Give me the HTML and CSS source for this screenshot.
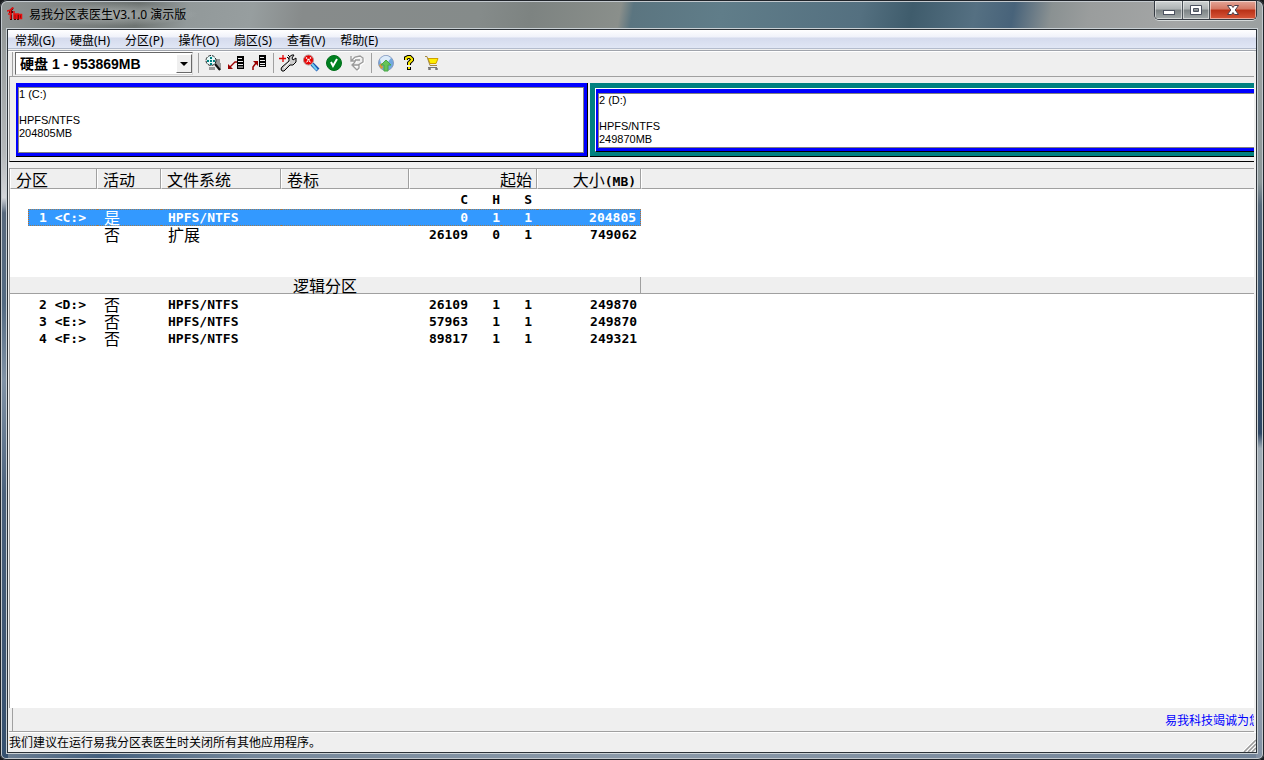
FILE: index.html
```html
<!DOCTYPE html>
<html lang="zh-CN">
<head>
<meta charset="utf-8">
<title>易我分区表医生V3.1.0 演示版</title>
<link rel="stylesheet" href="styles.css">
</head>
<body>
<div class="window">
  <header class="titlebar">
    <svg class="logo" width="16" height="16" viewBox="0 0 16 16" aria-hidden="true">
      <path fill="none" stroke="#500" stroke-width="2" d="M4 14V4l2-2M2 6h4M8 14V8M11 8v6M14 13V9"/>
      <path fill="none" stroke="#e81010" stroke-width="1.500" d="M3.500 13V4l2-2h1M0 5l4-1M1 8h4M7 13V5M7 8h2v5M10 13V8h2M12.500 8.500h2v4h-2z"/>
    </svg>
    <h1 class="title">易我分区表医生V3.1.0 演示版</h1>
    <div class="controls">
      <button class="control minimize" aria-label="最小化"><svg width="14" height="14" viewBox="0 0 14 14"><rect x="1.500" y="7.500" width="11" height="4" fill="#fff" stroke="#4c5260"/></svg></button>
      <button class="control maximize" aria-label="最大化"><svg width="14" height="14" viewBox="0 0 14 14"><path fill="#fff" fill-rule="evenodd" stroke="#4c5260" d="M1.500 2.500h11v9h-11zM4.500 5.500h5v3h-5z"/></svg></button>
      <button class="control close" aria-label="关闭"><svg width="14" height="14" viewBox="0 0 14 14"><path fill="#fff" stroke="#4b3d48" d="M1.500 2.500h4L7 4.500l1.500-2h4L9.200 7l3.300 4.500h-4L7 9.500l-1.500 2h-4L4.800 7z"/></svg></button>
    </div>
  </header>

  <main class="client">
    <nav class="menu" aria-label="菜单">
      <button>常规(G)</button><button>硬盘(H)</button><button>分区(P)</button><button>操作(O)</button><button>扇区(S)</button><button>查看(V)</button><button>帮助(E)</button>
    </nav>

    <div class="toolbar">
      <div class="combo">
        <select aria-label="硬盘"><option>硬盘 1 - 953869MB</option></select>
        <span class="combo-arrow" aria-hidden="true"></span>
      </div>
      <div class="group">
        <button aria-label="浏览"><svg width="18" height="18" viewBox="0 0 18 18"><path fill="#999" d="M12 5h4v4h1v7h-3v-3l-3-3zM5 13h6v3H5z"/><circle cx="7" cy="6.500" r="5" fill="#e4fafa" stroke="#222" stroke-dasharray="3 1"/><path stroke="#008080" stroke-width="2" stroke-dasharray="2 1" d="M7 3v8M3 7h9"/><path stroke="#111" stroke-width="2" d="M11 10l5 6"/></svg></button>
        <button aria-label="保存分区表"><svg width="18" height="18" viewBox="0 0 18 18"><path fill="#000" d="M10 2h7v13h-7z"/><path stroke="#eee" d="M11 4.500h4M11 7.500h5M11 10.500h5M11 13h5"/><path fill="none" stroke="#900" stroke-width="1.300" d="M10 8H8l-5 5"/><path fill="#900" d="M1 10v5h5z"/></svg></button>
        <button aria-label="恢复分区表"><svg width="18" height="18" viewBox="0 0 18 18"><path fill="#000" d="M9 1h7v12H9z"/><path stroke="#eee" d="M10 3.500h4M10 6.500h5M10 9.500h5M10 11.500h5"/><path fill="none" stroke="#900" stroke-width="1.500" d="M3 16v-3l3-4"/><path fill="#900" d="M3 7h5v5z"/></svg></button>
      </div>
      <div class="group">
        <button aria-label="修复"><svg width="18" height="18" viewBox="0 0 18 18"><path fill="#ccc" stroke="#000" d="M3 13l7-6V3l3-2h2l-2 3 1 2 3-2v4l-3 3h-3l-6 6H3l-1-2z"/><path stroke="#fff" d="M5 14l6-6"/><path stroke="#000" d="M8 3l2 2M9 1l2 2"/><path stroke="#e00000" stroke-width="1.300" d="M4 1v7M0 4.500h7"/></svg></button>
        <button aria-label="删除"><svg width="18" height="18" viewBox="0 0 18 18"><path stroke="#1550b0" stroke-width="4" d="M10 10l6 6"/><path stroke="#70d0f0" stroke-width="2" d="M10 10l5 6"/><circle cx="6.500" cy="6" r="5" fill="#e80000" stroke="#b89090"/><path stroke="#fff" stroke-width="1.300" stroke-dasharray="1.500 .7" d="M4 3.500l5 5M9 3.500l-5 5"/></svg></button>
        <button aria-label="应用"><svg width="18" height="18" viewBox="0 0 18 18"><circle cx="9" cy="9" r="7.500" fill="#008020" stroke="#00701a"/><path fill="none" stroke="#fff" stroke-width="2" d="M6 8l2 4 4-7"/></svg></button>
        <button aria-label="撤销"><svg width="18" height="18" viewBox="0 0 18 18"><g fill="none" stroke-width="1.300"><path stroke="#fff" d="M4 3v5h5M4 8l4-4 5-1 3 2v4l-5 3H6M6 12l4 4M12 12v3l-2 2"/><path stroke="#999" d="M3 2v5h5M3 7l4-4 5-1 3 2v4l-5 3H5M7 8l-3 3 5 5M5 11h6v3l-2 2M7 6h5"/></g></svg></button>
      </div>
      <div class="group">
        <button aria-label="网站"><svg width="18" height="18" viewBox="0 0 18 18"><circle cx="9" cy="9" r="7.500" fill="#70a8e0" stroke="#8a9cc0"/><path fill="#dcebfa" d="M3 5q5-6 11-1l-3 4-7 2z"/><path fill="#d99a38" d="M2 11l3-2 1 5-2 1z"/><path fill="#67c458" stroke="#48a848" d="M9 6l5 5h-3v6H7v-6H4z"/></svg></button>
        <button aria-label="帮助"><svg width="18" height="18" viewBox="0 0 18 18"><g fill="none" stroke="#000" stroke-width="4"><path d="M6 6V4l2-1h2l2 2v1l-3 3v2M9 13v3"/></g><g fill="none" stroke="#f8e800" stroke-width="2"><path d="M6 6V4l2-1h2l2 2v1l-3 3v2M9 13v2"/></g></svg></button>
        <button aria-label="购买"><svg width="18" height="18" viewBox="0 0 18 18"><path fill="#fff000" stroke="#d0a000" d="M5 4.500h10l-2 5H7z"/><path fill="none" stroke="#a48a40" d="M2 2.500h2l3 9h7"/><path stroke="#777" d="M5 13.500h9"/><path fill="none" stroke="#777" d="M5.500 14.500h2v1h-2zM12.500 14.500h2v1h-2z"/></svg></button>
      </div>
    </div>

    <section class="map" aria-label="分区图">
      <div class="partition primary">
        <div class="partition-body"><p>1 (C:)</p><p>&nbsp;</p><p>HPFS/NTFS</p><p>204805MB</p></div>
      </div>
      <div class="extended">
        <div class="partition logical">
          <div class="partition-body"><p>2 (D:)</p><p>&nbsp;</p><p>HPFS/NTFS</p><p>249870MB</p></div>
        </div>
      </div>
    </section>

    <section class="list">
      <table>
        <colgroup><col class="w-indent"><col class="w-no"><col class="w-active"><col class="w-fs"><col class="w-label"><col class="w-c"><col class="w-h"><col class="w-s"><col class="w-size"><col></colgroup>
        <thead>
          <tr class="head"><th colspan="2">分区</th><th>活动</th><th>文件系统</th><th>卷标</th><th class="num" colspan="3">起始</th><th class="num">大小<span class="unit">(MB)</span></th><th></th></tr>
        </thead>
        <tbody>
          <tr class="sub"><td colspan="5"></td><td class="num">C</td><td class="num">H</td><td class="num">S</td><td></td><td></td></tr>
          <tr class="selected"><td></td><td class="no">1 &lt;C:&gt;</td><td class="zh">是</td><td>HPFS/NTFS</td><td></td><td class="num">0</td><td class="num">1</td><td class="num">1</td><td class="num">204805</td><td></td></tr>
          <tr><td></td><td class="no"></td><td class="zh">否</td><td class="zh">扩展</td><td></td><td class="num">26109</td><td class="num">0</td><td class="num">1</td><td class="num">749062</td><td></td></tr>
          <tr class="space"><td colspan="10"></td></tr>
        </tbody>
        <tbody>
          <tr class="section"><th colspan="9">逻辑分区</th><th></th></tr>
          <tr class="gap"><td colspan="10"></td></tr>
          <tr><td></td><td class="no">2 &lt;D:&gt;</td><td class="zh">否</td><td>HPFS/NTFS</td><td></td><td class="num">26109</td><td class="num">1</td><td class="num">1</td><td class="num">249870</td><td></td></tr>
          <tr><td></td><td class="no">3 &lt;E:&gt;</td><td class="zh">否</td><td>HPFS/NTFS</td><td></td><td class="num">57963</td><td class="num">1</td><td class="num">1</td><td class="num">249870</td><td></td></tr>
          <tr><td></td><td class="no">4 &lt;F:&gt;</td><td class="zh">否</td><td>HPFS/NTFS</td><td></td><td class="num">89817</td><td class="num">1</td><td class="num">1</td><td class="num">249321</td><td></td></tr>
        </tbody>
      </table>
    </section>

    <div class="banner"><a href="#">易我科技竭诚为您</a></div>

    <footer class="status">
      <span>我们建议在运行易我分区表医生时关闭所有其他应用程序。</span>
      <svg class="grip" width="13" height="13" viewBox="0 0 13 13" aria-hidden="true"><path stroke="#fff" d="M0 12L12 0M4 12l8-8M8 12l4-4"/><path stroke="#999" stroke-width="1.500" d="M1 13L13 1M5 13l8-8M9 13l4-4"/></svg>
    </footer>
  </main>
</div>
</body>
</html>
```

FILE: styles.css
```css
* { box-sizing: border-box; }

body {
  margin: 0;
  background: #16181c;
  color: #000;
  font: 12px/16px "Noto Sans", "Noto Sans CJK SC", sans-serif;
}

h1, p { margin: 0; }

button { margin: 0; padding: 0; border: 0; background: none; color: inherit; font: inherit; }

.window {
  display: flex;
  flex-direction: column;
  min-height: 100vh;
  padding: 0 7px 7px;
  border-radius: 7px 7px 6px 6px;
  background:
    linear-gradient(100deg, #8f9494, #6e7472 11%, #92999a 15%, #979e9f 20%, #878b8b 24%, #858b8a 38%, #7d8381 42%, #8a8f8b 49%, #5b7580 50%, #607d89 57%, #547080 68%, #3f5c6c 72%, #557082 77%, #48637a 80%, #8a9192 83%, #9a9d9d 86%, #a4a6a6 93%, #9ba0a0) top / 100% 30px no-repeat,
    linear-gradient(#8d9292, #b4b8ba 20%, #d2d4d8 26%, #58697d 28%, #536a82 40%, #8193a6 50%, #4a617c 65%, #3e5673 85%, #35506f) left / 8px 100% no-repeat,
    linear-gradient(#a2a6a6, #8c9799 24%, #586a7c 27%, #3f5976 40%, #2f4765 57%, #9fabb5 59%, #a9b1ba 80%, #8290a3) right / 8px 100% no-repeat,
    linear-gradient(90deg, #6f8093, #44607e 8%, #76889b 20%, #8c9aa9 50%, #728398);
  box-shadow: inset 0 0 0 1px #20242a, inset 0 0 0 2px #c3c9ce;
}

.titlebar {
  display: flex;
  align-items: flex-start;
  height: 29px;
}

.logo { margin-top: 6px; }

.title {
  margin: 3px 0 0 2px;
  padding: 0 12px 0 4px;
  font-size: 12px;
  font-weight: 400;
  line-height: 23px;
  background: radial-gradient(closest-side, rgba(230, 235, 235, .45), rgba(230, 235, 235, 0));
}

.controls {
  display: flex;
  height: 20px;
  margin-left: auto;
  border: 1px solid #343a42;
  border-top-color: #20242a;
  border-radius: 0 0 5px 5px;
  box-shadow: 0 1px 0 #d5dada;
  overflow: hidden;
}

.control {
  display: flex;
  align-items: center;
  justify-content: center;
  width: 27px;
  border-right: 1px solid #4c5358;
  background: linear-gradient(#cfd3d3, #aeb3b4 45%, #7c8385 50%, #a5abab);
  box-shadow: inset 0 0 0 1px rgba(255, 255, 255, .5);
}

.minimize { width: 28px; }

.close {
  width: 46px;
  border-right: 0;
  background: linear-gradient(#e3a698, #d47763 45%, #b93016 50%, #d8573a);
}

.client {
  display: flex;
  flex: 1;
  flex-direction: column;
  min-width: 0;
  border: 1px solid #2c3238;
  background: #efefef;
  box-shadow: 0 0 0 1px #c9d0d4;
}

.menu {
  display: flex;
  gap: 1px;
  height: 21px;
  border-bottom: 1px solid #a0a4ac;
  background: linear-gradient(#fff, #f0f2fa 35%, #d5dbed 40%, #e0e6f5 90%, #b4bccd 91%, #b4bccd 95%, #f0f0f0 96%);
}

.menu button { padding: 0 7px; line-height: 19px; }

.toolbar {
  display: flex;
  height: 26px;
  margin: 0 2px 0 1px;
  padding-left: 3px;
  border-top: 1px solid #fff;
  border-bottom: 1px solid #a0a0a0;
}

.combo {
  position: relative;
  width: 181px;
  height: 24px;
  padding-left: 2px;
  border-left: 1px solid #a0a0a0;
}

.combo select {
  appearance: none;
  width: 100%;
  height: 23px;
  padding: 0 20px 0 4px;
  border: 1px solid #696969;
  border-right-color: #d8d8d8;
  border-bottom-color: #d8d8d8;
  border-radius: 0;
  background: #fff;
  color: #000;
  font: bold 14px/20px "Liberation Sans", "Noto Sans CJK SC", sans-serif;
}

.combo-arrow {
  position: absolute;
  top: 2px;
  right: 1px;
  display: flex;
  align-items: center;
  justify-content: center;
  width: 16px;
  height: 19px;
  border: 1px solid #fff;
  border-right-color: #696969;
  border-bottom-color: #696969;
  background: #efefef;
  pointer-events: none;
}

.combo-arrow::after {
  content: "";
  border: 4px solid transparent;
  border-top-color: #000;
  border-bottom: 0;
}

.group {
  display: flex;
  align-items: center;
  gap: 5px;
  height: 20px;
  margin: 1px 0 0 5px;
  padding-left: 5px;
  border-left: 1px solid #a0a0a0;
}

.group button { width: 18px; height: 18px; }

.group svg { display: block; }

.map {
  display: flex;
  gap: 2px;
  height: 85px;
  margin: 0 2px 0 1px;
  padding: 6px 0 4px 6px;
  border-left: 1px solid #a0a0a0;
  border-bottom: 1px solid #000;
  overflow: hidden;
}

.partition {
  padding: 4px 3px 3px 2px;
  background: #00f;
  border-right: 1px solid #000;
  border-bottom: 1px solid #000;
}

.primary { flex: 0 0 46.2%; }

.partition-body {
  height: 100%;
  border: 1px solid #808080;
  background: #fff;
  font: 11px/13px "Liberation Sans", sans-serif;
}

.extended {
  flex: 1;
  padding: 5px 0 4px 5px;
  background: #008080;
  border-bottom: 1px solid #000;
}

.logical {
  height: 100%;
  padding-right: 0;
  border-top: 1px solid #fff;
  border-right: 0;
  border-left: 1px solid #fff;
}

.logical .partition-body { border-right: 0; }

.list {
  flex: 1;
  margin: 6px 2px 0 1px;
  border-top: 1px solid #a0a0a0;
  border-left: 1px solid #a0a0a0;
  background: #fff;
}

table {
  width: 100%;
  table-layout: fixed;
  border-collapse: separate;
  border-spacing: 0;
  font: bold 13px/17px "DejaVu Sans Mono", "Noto Sans CJK SC", monospace;
}

.w-indent { width: 18px; }
.w-no { width: 69px; }
.w-active { width: 64px; }
.w-fs { width: 120px; }
.w-label { width: 128px; }
.w-c { width: 60px; }
.w-h { width: 32px; }
.w-s { width: 36px; }
.w-size { width: 104px; }

td { height: 17px; padding: 0 0 0 7px; line-height: 15px; white-space: nowrap; }

th {
  padding: 0 0 0 6px;
  border-right: 1px solid #a0a0a0;
  border-bottom: 1px solid #a0a0a0;
  background: #efefef;
  font: 16px/18px "Noto Sans CJK SC", sans-serif;
  text-align: left;
}

.head th { height: 20px; border-left: 1px solid #fff; padding-left: 5px; }

th:last-child { border-right: 0; }

.unit { font: bold 13px/13px "DejaVu Sans Mono", monospace; }

.num, .no { padding-left: 0; text-align: right; }
td.num { padding-right: 1px; }
td.num:nth-last-child(3) { padding-right: 5px; }
td.num:nth-last-child(2) { padding-right: 4px; }
th.num { padding-right: 4px; }
.no { padding-right: 11px; }

.zh { font: 16px/15px "Noto Sans CJK SC", sans-serif; }

.sub td { height: 20px; padding-top: 1px; }

.selected td:not(:first-child):not(:last-child) {
  border-top: 1px dotted #9c7a50;
  border-bottom: 1px dotted #9c7a50;
  background: #3399ff;
  color: #fff;
}

.selected td:nth-child(2) { border-left: 1px dotted #c66a1c; }
.selected td:nth-last-child(2) { border-right: 1px dotted #c66a1c; }

.space td { height: 34px; }

.section th { height: 17px; padding: 0; line-height: 16px; text-align: center; }

.gap td { height: 2px; line-height: 0; }

.banner {
  display: flex;
  justify-content: flex-end;
  height: 24px;
  margin: 0 2px 0 1px;
  border-bottom: 1px solid #a0a0a0;
  padding-left: 3px;
}

.banner::before {
  content: "";
  flex: 1;
  border-left: 1px solid #a0a0a0;
}

.banner a {
  width: 89px;
  overflow: hidden;
  color: #00f;
  line-height: 25px;
  text-decoration: none;
  white-space: nowrap;
}

.status {
  display: flex;
  justify-content: space-between;
  align-items: flex-end;
  height: 20px;
  padding-left: 1px;
  border-top: 1px solid #fff;
  line-height: 18px;
}
```
